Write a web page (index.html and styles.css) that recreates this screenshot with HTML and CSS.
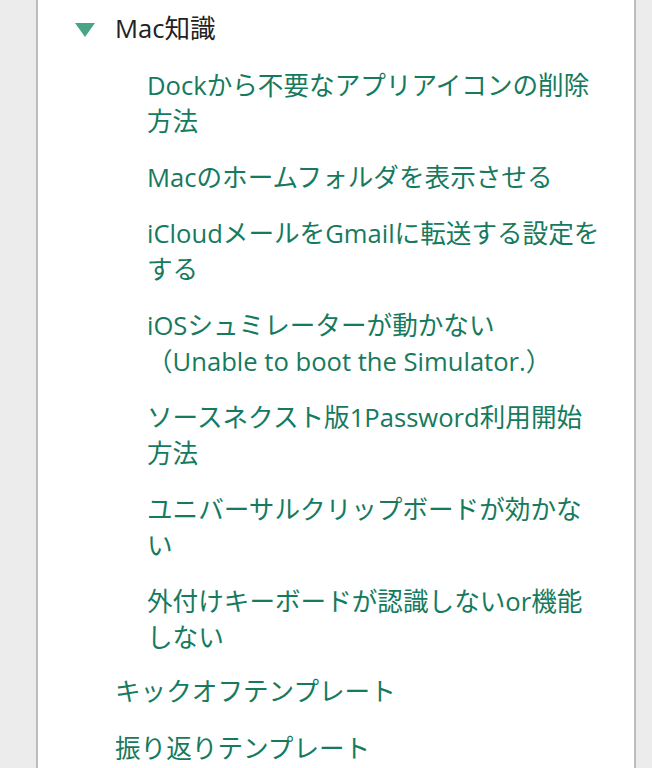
FILE: index.html
```html
<!DOCTYPE html>
<html lang="ja">
<head>
<meta charset="utf-8">
<title>Mac知識</title>
<link rel="stylesheet" href="styles.css">
</head>
<body>
<div class="panel">
  <ul class="tree">
    <li class="group">
      <div class="group-head"><span class="caret"></span><span class="group-title">Mac知識</span></div>
      <ul class="sub">
        <li><a href="#">Dockから不要なアプリアイコンの削除方法</a></li>
        <li><a href="#">Macのホームフォルダを表示させる</a></li>
        <li><a href="#">iCloudメールをGmailに転送する設定をする</a></li>
        <li><a href="#">iOSシュミレーターが動かない（Unable to boot the Simulator.）</a></li>
        <li><a href="#">ソースネクスト版1Password利用開始方法</a></li>
        <li><a href="#">ユニバーサルクリップボードが効かない</a></li>
        <li><a href="#">外付けキーボードが認識しないor機能しない</a></li>
      </ul>
    </li>
    <li class="leaf"><a href="#">キックオフテンプレート</a></li>
    <li class="leaf"><a href="#">振り返りテンプレート</a></li>
  </ul>
</div>
</body>
</html>
```
FILE: styles.css
```css
html, body {
  margin: 0;
  padding: 0;
  background: #ececec;
  height: 100%;
  overflow: hidden;
}
body {
  font-family: "Open Sans", "Noto Sans CJK JP", sans-serif;
  font-size: 25.6px;
  line-height: 36px;
}
.panel {
  margin-left: 36px;
  width: 596px;
  min-height: 100%;
  background: #fff;
  border-left: 2px solid #bdbdbd;
  border-right: 2px solid #bdbdbd;
  padding-top: 11px;
}
.tree, .sub {
  list-style: none;
  margin: 0;
  padding: 0;
}
.tree {
  padding-left: 77px;
}
.group-head {
  display: flex;
  align-items: center;
  margin-left: -40px;
  height: 36px;
}
.caret {
  width: 0;
  height: 0;
  border-left: 10px solid transparent;
  border-right: 10px solid transparent;
  border-top: 14px solid #4aa584;
  margin-right: 20px;
  margin-top: 2px;
}
.group-title {
  color: #222;
}
.sub {
  padding-left: 32px;
  padding-top: 21px;
  padding-right: 30px;
}
.sub li {
  margin-bottom: 20px;
}
.sub li:last-child {
  margin-bottom: 18px;
}
.leaf {
  margin-bottom: 21px;
}
a {
  color: #167a5e;
  text-decoration: none;
}
```
